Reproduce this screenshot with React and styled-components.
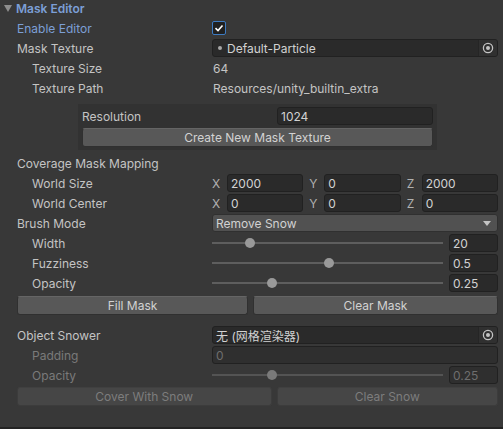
import React from 'react'
import styled, { createGlobalStyle } from 'styled-components'

const Global = createGlobalStyle`
  html, body { margin: 0; padding: 0; background: #383838; }
  body {
    font-family: Inter, "Noto Sans", "Noto Sans CJK SC", sans-serif;
    font-size: 12px;
    color: #c4c4c4;
  }
`

const Panel = styled.div`
  width: 503px;
  height: 429px;
  box-sizing: border-box;
  background: #383838;
  border-bottom: 2px solid #232323;
  padding: 0 5px 0 0;
  display: flex;
  flex-direction: column;
`

const Header = styled.div`
  height: 20px;
  flex-shrink: 0;
  display: flex;
  align-items: center;
  padding-left: 4px;
  gap: 4px;
  color: #7c9fd6;
  font-weight: 600;
  margin-top: -2px;
`

const Fold = styled.span`
  width: 0;
  height: 0;
  border-left: 4px solid transparent;
  border-right: 4px solid transparent;
  border-top: 7px solid #8e8e8e;
`

const Row = styled.div`
  height: 20px;
  flex-shrink: 0;
  display: grid;
  grid-template-columns: 195px 1fr;
  align-items: center;
  padding-left: 17px;
  margin-top: ${({ $mt }) => $mt || 0}px;
`

const Label = styled.span`
  margin-left: ${({ $indent }) => ($indent ? 15 : 0)}px;
  color: ${({ $tone }) =>
    $tone === 'blue' ? '#7c9fd6' : $tone === 'off' ? '#7a7a7a' : '#c4c4c4'};
  white-space: nowrap;
`

const Value = styled.span`
  padding-left: 1px;
  color: #c4c4c4;
`

const Check = styled.span`
  width: 12px;
  height: 12px;
  border: 1px solid #3d7bc2;
  border-radius: 2px;
  background: #202020;
  display: flex;
  align-items: center;
  justify-content: center;
`

const Field = styled.div`
  height: 18px;
  box-sizing: border-box;
  background: ${({ $off }) => ($off ? '#2f2f2f' : '#2a2a2a')};
  border: 1px solid #212121;
  border-radius: 3px;
  display: flex;
  align-items: center;
  padding-left: 3px;
  color: ${({ $off }) => ($off ? '#6e6e6e' : '#d2d2d2')};
  overflow: hidden;
  white-space: nowrap;
`

const ObjField = styled(Field)`
  padding-left: 0;
`

const ObjText = styled.span`
  flex: 1;
  display: flex;
  align-items: center;
  gap: 5px;
  padding-left: ${({ $icon }) => ($icon ? 5 : 3)}px;
`

const Dot = styled.span`
  width: 4px;
  height: 4px;
  border-radius: 50%;
  background: #a8a8a8;
`

const Picker = styled.span`
  width: 18px;
  height: 100%;
  background: #303030;
  border-left: 1px solid #252525;
  display: flex;
  align-items: center;
  justify-content: center;
`

const Box = styled.div`
  margin: 6px 0 3px 78px;
  width: 359px;
  flex-shrink: 0;
  box-sizing: border-box;
  background: #323232;
  padding: 3px 4px;
  display: flex;
  flex-direction: column;
  gap: 4px;
`

const BoxRow = styled.div`
  height: 17px;
  display: grid;
  grid-template-columns: 195px 1fr;
  align-items: center;
`

const Button = styled.button`
  height: 19px;
  box-sizing: border-box;
  font: inherit;
  background: ${({ $off }) => ($off ? '#464646' : '#585858')};
  color: ${({ $off }) => ($off ? '#7d7d7d' : '#d2d2d2')};
  border: 1px solid ${({ $off }) => ($off ? '#3c3c3c' : '#303030')};
  border-top-color: ${({ $off }) => ($off ? '#404040' : '#656565')};
  border-radius: 3px;
  padding: 0;
  cursor: default;
`

const ButtonRow = styled.div`
  display: grid;
  flex-shrink: 0;
  grid-template-columns: ${({ $cols }) => $cols};
  gap: 5px;
  padding-left: 17px;
  margin-top: ${({ $mt }) => $mt || 0}px;
`

const Vector = styled.div`
  display: grid;
  grid-template-columns: repeat(3, 1fr);
  gap: 6px;
`

const Axis = styled.div`
  display: grid;
  grid-template-columns: 15px 1fr;
  align-items: center;
  color: #b0b0b0;
`

const Dropdown = styled.div`
  height: 18px;
  box-sizing: border-box;
  background: #515151;
  border: 1px solid #303030;
  border-radius: 3px;
  display: flex;
  align-items: center;
  justify-content: space-between;
  padding: 0 6px 0 3px;
  color: #d2d2d2;
`

const Arrow = styled.span`
  width: 0;
  height: 0;
  border-left: 4px solid transparent;
  border-right: 4px solid transparent;
  border-top: 5px solid #c4c4c4;
`

const SliderWrap = styled.div`
  display: grid;
  grid-template-columns: 1fr 49px;
  gap: 6px;
  align-items: center;
`

const Track = styled.div`
  position: relative;
  height: 2px;
  background: ${({ $off }) => ($off ? '#545454' : '#5e5e5e')};
`

const Knob = styled.span`
  position: absolute;
  top: -4px;
  width: 10px;
  height: 10px;
  margin-left: -5px;
  border-radius: 50%;
  background: ${({ $off }) => ($off ? '#7a7a7a' : '#999999')};
`

const Slider = ({ pos, value, off }) => (
  <SliderWrap>
    <Track $off={off}>
      <Knob $off={off} style={{ left: `${pos}%` }} />
    </Track>
    <Field $off={off}>{value}</Field>
  </SliderWrap>
)

const Target = () => (
  <svg width="12" height="12" viewBox="0 0 12 12">
    <circle cx="6" cy="6" r="4.6" fill="none" stroke="#c4c4c4" strokeWidth="1.3" />
    <circle cx="6" cy="6" r="2" fill="#c4c4c4" />
  </svg>
)

const VectorField = ({ x, y, z }) => (
  <Vector>
    <Axis>X<Field>{x}</Field></Axis>
    <Axis>Y<Field>{y}</Field></Axis>
    <Axis>Z<Field>{z}</Field></Axis>
  </Vector>
)

export default function App() {
  return (
    <>
      <Global />
      <Panel>
        <Header>
          <Fold />
          Mask Editor
        </Header>
        <Row>
          <Label $tone="blue">Enable Editor</Label>
          <Check>
            <svg width="10" height="10" viewBox="0 0 10 10">
              <path d="M1.5 5.2 L4 7.5 L8.5 2.5" fill="none" stroke="#fff" strokeWidth="1.6" />
            </svg>
          </Check>
        </Row>
        <Row>
          <Label>Mask Texture</Label>
          <ObjField>
            <ObjText $icon>
              <Dot />
              Default-Particle
            </ObjText>
            <Picker><Target /></Picker>
          </ObjField>
        </Row>
        <Row>
          <Label $indent>Texture Size</Label>
          <Value>64</Value>
        </Row>
        <Row>
          <Label $indent>Texture Path</Label>
          <Value>Resources/unity_builtin_extra</Value>
        </Row>

        <Box>
          <BoxRow>
            <Label>Resolution</Label>
            <Field>1024</Field>
          </BoxRow>
          <Button>Create New Mask Texture</Button>
        </Box>

        <Row>
          <Label>Coverage Mask Mapping</Label>
        </Row>
        <Row>
          <Label $indent>World Size</Label>
          <VectorField x="2000" y="0" z="2000" />
        </Row>
        <Row>
          <Label $indent>World Center</Label>
          <VectorField x="0" y="0" z="0" />
        </Row>
        <Row>
          <Label>Brush Mode</Label>
          <Dropdown>
            Remove Snow
            <Arrow />
          </Dropdown>
        </Row>
        <Row>
          <Label $indent>Width</Label>
          <Slider pos={16.5} value="20" />
        </Row>
        <Row>
          <Label $indent>Fuzziness</Label>
          <Slider pos={50.5} value="0.5" />
        </Row>
        <Row>
          <Label $indent>Opacity</Label>
          <Slider pos={26} value="0.25" />
        </Row>
        <ButtonRow $cols="231fr 245fr" $mt={3}>
          <Button>Fill Mask</Button>
          <Button>Clear Mask</Button>
        </ButtonRow>

        <Row $mt={10}>
          <Label>Object Snower</Label>
          <ObjField>
            <ObjText>无 (网格渲染器)</ObjText>
            <Picker><Target /></Picker>
          </ObjField>
        </Row>
        <Row>
          <Label $indent $tone="off">Padding</Label>
          <Field $off>0</Field>
        </Row>
        <Row>
          <Label $indent $tone="off">Opacity</Label>
          <Slider pos={26} value="0.25" off />
        </Row>
        <ButtonRow $cols="254fr 221fr" $mt={2}>
          <Button $off>Cover With Snow</Button>
          <Button $off>Clear Snow</Button>
        </ButtonRow>
      </Panel>
    </>
  )
}
